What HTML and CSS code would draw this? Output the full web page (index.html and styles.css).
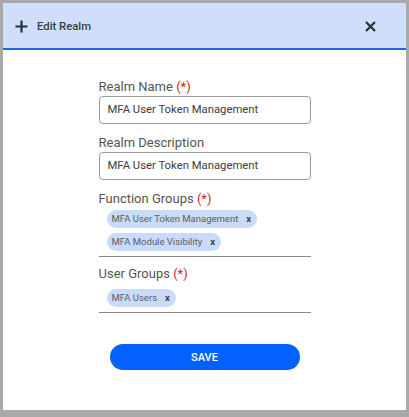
FILE: index.html
```html
<!DOCTYPE html>
<html>
<head>
<meta charset="utf-8">
<link rel="stylesheet" href="styles.css">
</head>
<body>
<div class="dialog">
  <div class="header">
    <svg class="plus" width="13" height="13" viewBox="0 0 13 13"><path d="M6.5 0.5v12M0.5 6.5h12" stroke="#2b2f36" stroke-width="2.2" fill="none"/></svg>
    <span class="title">Edit Realm</span>
    <svg class="close" width="11" height="11" viewBox="0 0 11 11"><path d="M1 1l9 9M10 1l-9 9" stroke="#2b2f36" stroke-width="2.2" fill="none"/></svg>
  </div>
  <div class="form">
    <div class="label">Realm Name <span class="req">(*)</span></div>
    <div class="input">MFA User Token Management</div>
    <div class="label">Realm Description</div>
    <div class="input">MFA User Token Management</div>
    <div class="label">Function Groups <span class="req">(*)</span></div>
    <div class="chips">
      <span class="chip">MFA User Token Management<span class="x">x</span></span>
      <span class="chip">MFA Module Visibility<span class="x">x</span></span>
    </div>
    <div class="label label-tight">User Groups <span class="req">(*)</span></div>
    <div class="chips chips-loose">
      <span class="chip">MFA Users<span class="x">x</span></span>
    </div>
    <div class="actions"><button class="save">SAVE</button></div>
  </div>
</div>
</body>
</html>
```
FILE: styles.css
```css
html, body { margin: 0; padding: 0; }
body {
  background: #a9a9a9;
  width: 409px;
  height: 417px;
  overflow: hidden;
  font-family: Roboto, "Liberation Sans", sans-serif;
  padding-top: 3px;
  box-sizing: border-box;
}
.dialog {
  margin-left: 3px;
  width: 403px;
  height: 407px;
  background: #fff;
}
.header {
  height: 45px;
  background: #cfdffb;
  border-bottom: 2px solid #1b6ae4;
  display: flex;
  align-items: center;
  padding: 0 30px 0 12px;
}
.plus { margin-top: 2px; }
.title {
  margin-left: 9px;
  font-size: 11.3px;
  font-weight: 500;
  color: #3a3d42;
  flex: 1;
  margin-top: 1px;
}
.close { margin-top: 2px; }
.form {
  width: 212px;
  margin: 0 auto;
  padding-top: 29px;
  display: flex;
  flex-direction: column;
}
.label {
  font-size: 13px;
  line-height: 16px;
  color: #555;
  margin-top: 11px;
}
.label:first-child { margin-top: 0; }
.label-tight { margin-top: 9px; }
.req { color: #c62828; }
.input {
  margin-top: 1px;
  height: 28px;
  box-sizing: border-box;
  border: 1px solid #9a9a9a;
  border-radius: 4px;
  padding: 0 8px;
  font-size: 11.3px;
  line-height: 26px;
  color: #3c3c3c;
}
.chips {
  margin-top: 3px;
  padding: 0 8px 5px;
  border-bottom: 1px solid #888;
  display: flex;
  flex-direction: column;
  align-items: flex-start;
  gap: 5px;
}
.chips-loose { margin-top: 7px; }
.chip {
  height: 18px;
  line-height: 18px;
  background: #c9dbf8;
  border-radius: 9px;
  padding: 0 6px 0 5px;
  font-size: 9.5px;
  color: #5a5f66;
  display: inline-flex;
  align-items: center;
}
.x {
  margin-left: 8px;
  font-size: 9.5px;
  font-weight: bold;
  color: #444;
}
.actions {
  margin-top: 31px;
  display: flex;
  justify-content: center;
}
.save {
  width: 190px;
  height: 26px;
  border: none;
  border-radius: 13px;
  background: #0361fd;
  color: #fff;
  font-family: Roboto, "Liberation Sans", sans-serif;
  font-weight: 500;
  font-size: 11px;
}
```
